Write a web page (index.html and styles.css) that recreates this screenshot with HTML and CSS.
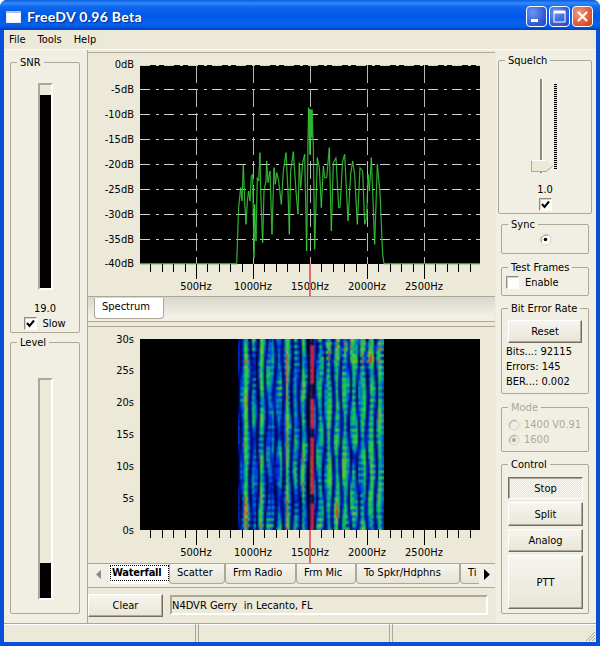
FILE: index.html
```html
<!DOCTYPE html>
<html lang="en">
<head>
<meta charset="utf-8">
<title>FreeDV 0.96 Beta</title>
<link rel="stylesheet" href="styles.css">
</head>
<body>
<div class="window">
  <header class="titlebar">
    <svg class="appicon" width="15" height="13" viewBox="0 0 15 13"><rect x="0" y="0" width="15" height="12" fill="#e8eefc"/><rect x="0" y="0" width="15" height="2" fill="#a9c4f2"/><rect x="1" y="2" width="13" height="9" fill="#fff"/></svg>
    <span class="title">FreeDV 0.96 Beta</span>
    <span class="winbtn"><svg width="19" height="19" viewBox="0 0 19 19"><rect x="4" y="12" width="7" height="3" fill="#fff"/></svg></span>
    <span class="winbtn"><svg width="19" height="19" viewBox="0 0 19 19"><rect x="4" y="4" width="11" height="11" fill="none" stroke="#fff" stroke-width="1"/><rect x="4" y="4" width="11" height="2.5" fill="#fff"/></svg></span>
    <span class="winbtn close"><svg width="19" height="19" viewBox="0 0 19 19"><path d="M5 5 L14 14 M14 5 L5 14" stroke="#fff" stroke-width="2.2" fill="none"/></svg></span>
  </header>
  <div class="client">
    <nav class="menubar"><span>File</span><span>Tools</span><span>Help</span></nav>
    <div class="main">
      <aside class="leftcol">
        <section class="group snr">
          <span class="legend">SNR</span>
          <div class="meter meter-snr"><div class="fill fill-snr"></div></div>
          <div class="value">19.0</div>
          <label class="check slow"><span class="box"><svg width="9" height="9" viewBox="0 0 9 9"><path d="M1 4 L3.5 7 L8 1.5" fill="none" stroke="#000" stroke-width="2"/></svg></span>Slow</label>
        </section>
        <section class="group level">
          <span class="legend">Level</span>
          <div class="meter meter-level"><div class="fill fill-level"></div></div>
        </section>
      </aside>

      <div class="centercol">
        <div class="plot plot-spectrum">
          <svg id="spectrum" width="406" height="243" viewBox="88 52 406 243">
            <rect x="140" y="64" width="340" height="199" fill="#000"/>
            <g id="spec-grid"></g>
            <g transform="translate(230 90) scale(0.33333)">
              <polyline class="trace-glow" points="-270,518 20,518 22,460 26,350 32,290 36,330 40,222 44,330 48,400 52,330 56,300 60,330 64,255 68,250 72,500 74,340 78,450 82,260 86,270 90,185 92,300 98,455 102,300 108,270 110,210 114,275 120,240 126,430 132,230 136,280 140,245 146,270 154,340 160,240 168,185 174,300 178,430 182,240 190,182 198,300 204,370 208,215 212,290 218,215 224,190 230,480 234,150 236,50 240,190 243,60 246,60 250,170 254,475 262,200 268,230 274,350 280,225 284,260 290,260 298,170 304,420 310,215 318,200 326,350 330,350 338,210 344,190 354,390 362,250 368,210 374,250 382,400 390,230 398,240 404,400 410,380 414,250 418,300 424,200 434,460 442,220 450,305 458,490 462,518 750,518"/>
              <polyline class="trace" points="-270,518 20,518 22,460 26,350 32,290 36,330 40,222 44,330 48,400 52,330 56,300 60,330 64,255 68,250 72,500 74,340 78,450 82,260 86,270 90,185 92,300 98,455 102,300 108,270 110,210 114,275 120,240 126,430 132,230 136,280 140,245 146,270 154,340 160,240 168,185 174,300 178,430 182,240 190,182 198,300 204,370 208,215 212,290 218,215 224,190 230,480 234,150 236,50 240,190 243,60 246,60 250,170 254,475 262,200 268,230 274,350 280,225 284,260 290,260 298,170 304,420 310,215 318,200 326,350 330,350 338,210 344,190 354,390 362,250 368,210 374,250 382,400 390,230 398,240 404,400 410,380 414,250 418,300 424,200 434,460 442,220 450,305 458,490 462,518 750,518"/>
              <rect x="236" y="55" width="12" height="85" fill="#2fb52f"/>
            </g>
            <g id="spec-ticks"></g>
            <g class="axis-y">
              <text x="134" y="67">0dB</text><text x="134" y="92">-5dB</text><text x="134" y="117">-10dB</text><text x="134" y="142">-15dB</text><text x="134" y="167">-20dB</text><text x="134" y="192">-25dB</text><text x="134" y="217">-30dB</text><text x="134" y="242">-35dB</text><text x="134" y="266">-40dB</text>
            </g>
            <g class="axis-x">
              <text x="196" y="289">500Hz</text><text x="253" y="289">1000Hz</text><text x="310" y="289">1500Hz</text><text x="367" y="289">2000Hz</text><text x="424" y="289">2500Hz</text>
            </g>
            <rect x="309" y="263" width="2" height="32" fill="#e36a6a"/>
          </svg>
        </div>
        <div class="tabstrip tabstrip-top">
          <span class="tab tab-spectrum">Spectrum</span>
        </div>

        <div class="plot plot-waterfall">
          <svg id="waterfall-axes" width="406" height="236" viewBox="88 327 406 236">
            <rect x="140" y="339" width="340" height="191" fill="#000"/>
            <g id="wf-ticks"></g>
            <g class="axis-y">
              <text x="134" y="343">30s</text><text x="134" y="374">25s</text><text x="134" y="406">20s</text><text x="134" y="438">15s</text><text x="134" y="470">10s</text><text x="134" y="502">5s</text><text x="134" y="534">0s</text>
            </g>
            <g class="axis-x">
              <text x="196" y="556">500Hz</text><text x="253" y="556">1000Hz</text><text x="310" y="556">1500Hz</text><text x="367" y="556">2000Hz</text><text x="424" y="556">2500Hz</text>
            </g>
            <rect x="309" y="530" width="2" height="33" fill="#e36a6a"/>
          </svg>
          <canvas id="waterfall" class="wf-canvas" width="73" height="64"></canvas>
        </div>
        <div class="tabstrip tabstrip-bottom">
          <span class="scroll"><svg width="8" height="11" viewBox="0 0 8 11"><path d="M6 1 L1 5.5 L6 10 Z" fill="#8c8a80"/></svg></span>
          <span class="tab tab-active"><span class="focus">Waterfall</span></span>
          <span class="tab w-scatter">Scatter</span>
          <span class="tab w-radio">Frm Radio</span>
          <span class="tab w-mic">Frm Mic</span>
          <span class="tab w-spkr">To Spkr/Hdphns</span>
          <span class="tab w-ti">Ti</span>
          <span class="scroll scroll-right"><svg width="8" height="11" viewBox="0 0 8 11"><path d="M1 0 L7 5.5 L1 11 Z" fill="#000"/></svg></span>
        </div>
        <div class="msgrow">
          <button class="btn clear">Clear</button>
          <div class="msgbox">N4DVR Gerry&nbsp; in Lecanto, FL</div>
        </div>
      </div>

      <aside class="rightcol">
        <section class="group squelch">
          <span class="legend">Squelch</span>
          <div class="slider">
            <div class="track"></div>
            <svg class="thumb" width="23" height="13" viewBox="0 0 23 13"><path d="M0.5 0.5 H15 L21.5 6 L15 11.5 H0.5 Z" fill="#ece9d8" stroke="#aca899"/><path d="M0.5 0.5 H15 L21 5.5" fill="none" stroke="#fff"/></svg>
            <div class="ticks"></div>
          </div>
          <div class="value">1.0</div>
          <span class="box boxc"><svg width="9" height="9" viewBox="0 0 9 9"><path d="M1 4 L3.5 7 L8 1.5" fill="none" stroke="#000" stroke-width="2"/></svg></span>
        </section>
        <section class="group sync">
          <span class="legend">Sync</span>
          <svg class="radio" width="13" height="13" viewBox="0 0 13 13"><circle cx="6.5" cy="6.5" r="5.5" fill="#fff" stroke="#d2cfbf"/><path d="M2.5 9 A5 5 0 0 1 9 2.5" fill="none" stroke="#9a988c"/><circle cx="6.5" cy="6.5" r="1.8" fill="#000"/></svg>
        </section>
        <section class="group frames">
          <span class="legend">Test Frames</span>
          <label class="check"><span class="box"></span>Enable</label>
        </section>
        <section class="group ber">
          <span class="legend">Bit Error Rate</span>
          <button class="btn reset">Reset</button>
          <div class="stat">Bits...: 92115</div>
          <div class="stat">Errors: 145</div>
          <div class="stat">BER...: 0.002</div>
        </section>
        <section class="group mode">
          <span class="legend">Mode</span>
          <div class="opt"><svg width="12" height="12" viewBox="0 0 12 12"><circle cx="6" cy="6" r="5" fill="none" stroke="#d6d3c4"/><path d="M2 8.5 A5 5 0 0 1 8.5 2" fill="none" stroke="#a8a698"/></svg>1400 V0.91</div>
          <div class="opt"><svg width="12" height="12" viewBox="0 0 12 12"><circle cx="6" cy="6" r="5" fill="none" stroke="#d6d3c4"/><path d="M2 8.5 A5 5 0 0 1 8.5 2" fill="none" stroke="#a8a698"/><circle cx="6" cy="6" r="2" fill="#a8a698"/></svg>1600</div>
        </section>
        <section class="group control">
          <span class="legend">Control</span>
          <button class="btn pressed">Stop</button>
          <button class="btn split">Split</button>
          <button class="btn analog">Analog</button>
          <button class="btn ptt">PTT</button>
        </section>
      </aside>
    </div>
    <footer class="statusbar">
      <span class="cell c1"></span><span class="cell c2"></span><span class="cell c3"><svg class="grip" width="12" height="12" viewBox="0 0 12 12"><path d="M11 2 L2 11 M11 5 L5 11 M11 8 L8 11" stroke="#aca899" stroke-width="1"/></svg></span>
    </footer>
  </div>
</div>
<script src="app.js"></script>
</body>
</html>
```
FILE: styles.css
```css
* { box-sizing: border-box; }
html, body { margin: 0; padding: 0; background: #fff; }
body { font: 11px "DejaVu Sans Condensed", "DejaVu Sans", sans-serif; color: #000; }
.window { width: 600px; height: 646px; display: flex; flex-direction: column; background: #0a4fdc; border-radius: 7px 7px 0 0; overflow: hidden; }

.titlebar { height: 30px; display: flex; align-items: center; padding: 3px 7px 0 6px; flex: none;
  background: linear-gradient(#0a5ae0 0, #2f8bf8 3px, #0f66ee 7px, #0058e8 16px, #0463ee 24px, #0050d8 28px, #003dbc 30px); }
.appicon { flex: none; margin-top: 1px; }
.title { flex: 1; margin-left: 6px; font: 700 14px Lato, "DejaVu Sans", sans-serif; color: #fff; text-shadow: 1px 1px 1px #0a2f8c; letter-spacing: .3px; }
.winbtn { width: 21px; height: 21px; margin-left: 2px; border: 1px solid #fff; border-radius: 4px; display: flex; align-items: center; justify-content: center; background: radial-gradient(circle at 30% 30%, #6d94f0, #2a56d6 70%, #2348c0); }
.close { background: radial-gradient(circle at 30% 30%, #ee9a80, #d8532c 70%, #c03a18); }

.client { flex: 1; margin: 0 4px 4px; display: flex; flex-direction: column; background: #ece9d8; min-height: 0; }
.menubar { height: 20px; flex: none; display: flex; padding: 3px 0 0 5px; gap: 12px; border-bottom: 1px solid #fbfaf4; font-size: 11px; }
.main { height: 573px; flex: none; display: flex; background: #f1efe3; }

.group { position: relative; border: 1px solid #aca899; border-radius: 2px; }
.legend { position: absolute; top: -7px; left: 6px; padding: 0 3px; background: #f1efe3; line-height: 13px; white-space: nowrap; }

.leftcol { width: 83px; flex: none; padding: 12px 0 0 6px; display: flex; flex-direction: column; gap: 9px; }
.snr { width: 70px; height: 271px; display: flex; flex-direction: column; align-items: center; padding-top: 20px; }
.level { width: 70px; height: 272px; display: flex; flex-direction: column; align-items: center; padding-top: 35px; }
.meter { width: 15px; border: 2px solid; border-color: #aca899 #fff #fff #aca899; background: #ece9d8; display: flex; flex-direction: column; justify-content: flex-end; }
.fill { background: #000; }
.meter-snr { height: 207px; }
.fill-snr { height: 193px; }
.meter-level { height: 222px; }
.fill-level { height: 35px; }
.value { text-align: center; line-height: 13px; margin-top: 12px; }
.check { display: flex; align-items: center; gap: 5px; }
.box { width: 13px; height: 13px; border: 1px solid #8f8d80; border-right-color: #fff; border-bottom-color: #fff; background: #fff; display: flex; align-items: center; justify-content: center; flex: none; box-shadow: inset 1px 1px 0 #d8d5c6; }
.slow { margin-top: 2px; }

.centercol { width: 408px; flex: none; display: flex; flex-direction: column; background: #ece9d8; border-left: 1px solid #aca899; }
.plot { background: #ece9d8; position: relative; flex: none; }
.plot svg { display: block; }
.plot-spectrum { border-top: 1px solid #aca899; margin-top: 2px; height: 244px; }
.tabstrip-top { height: 26px; flex: none; margin-top: 0; display: flex; align-items: flex-start; padding: 1px 0 0 6px; border-top: 1px solid #aca899; border-bottom: 1px solid #aca899; background: linear-gradient(#d9d7cb 0, #f3f2e9 21px, #f1efe3 22px); }
.plot-waterfall { border-top: 1px solid #aca899; margin-top: 4px; height: 237px; }
.wf-canvas { position: absolute; left: 150px; top: 12px; width: 146px; height: 191px; }
.tabstrip-bottom { height: 25px; flex: none; display: flex; align-items: flex-start; border-top: 1px solid #aca899; border-bottom: 1px solid #aca899; background: #f1efe3; padding-left: 0; position: relative; }
.scroll { width: 21px; height: 20px; display: flex; align-items: center; justify-content: center; flex: none; padding-left: 1px; }
.scroll-right { position: absolute; right: 2px; top: 0; background: #f1efe3; width: 14px; }
.tab { height: 20px; line-height: 17px; border: 1px solid #aca899; border-top: 0; border-radius: 0 0 4px 4px; background: linear-gradient(#f7f6ef, #e6e3d4); text-align: left; padding-left: 7px; flex: none; white-space: nowrap; overflow: hidden; }
.tab-spectrum { width: 70px; height: 21px; background: #fff; padding-left: 7px; font-size: 11px; }
.tab-active { width: 60px; background: #fff; border: 0; padding: 1px 0 0 1px; font-weight: 700; }
.focus { display: block; border: 1px dotted #000; line-height: 14px; padding: 0 1px; height: 16px; letter-spacing: -.2px; }
.w-scatter { width: 56px; }
.w-radio { width: 71px; }
.w-mic { width: 60px; }
.w-spkr { width: 104px; }
.w-ti { width: 30px; }
.msgrow { flex: 1; display: flex; align-items: flex-start; padding: 6px 0 0 0; gap: 7px; }
.btn { font: inherit; color: #000; background: linear-gradient(#f6f5ee, #e9e6d8); border: 1px solid; border-color: #fff #716f64 #716f64 #fff; box-shadow: inset -1px -1px 0 #aca899; padding: 0; display: block; }
.clear { width: 75px; height: 23px; margin-left: 0; }
.msgbox { width: 318px; height: 20px; margin-top: 1px; border: 2px solid; border-color: #aca899 #fff #fff #aca899; padding: 1px 0 0 0; line-height: 15px; background: #ece9d8; }

.rightcol { width: 101px; flex: none; padding-top: 10px; display: flex; flex-direction: column; align-items: flex-start; padding-left: 5px; border-left: 1px solid #ece9d8; }
.squelch { width: 94px; height: 154px; margin-left: -3px; display: flex; flex-direction: column; align-items: center; }
.slider { position: relative; width: 92px; height: 100px; margin-top: 18px; flex: none; }
.track { position: absolute; left: 41px; top: 0; width: 3px; height: 94px; background: #8d8b7e; border-right: 1px solid #fff; }
.thumb { position: absolute; left: 32px; top: 81px; }
.ticks { position: absolute; left: 55px; top: 5px; width: 3px; height: 85px; background: repeating-linear-gradient(#000 0 1px, #d8d5c6 1px 2px); }
.squelch .value { margin-top: 4px; }
.boxc { margin-top: 2px; }
.sync { width: 88px; height: 30px; margin-top: 10px; display: flex; justify-content: center; align-items: center; padding-top: 0; }
.frames { width: 88px; height: 29px; margin-top: 13px; padding: 8px 0 0 4px; }
.frames .check { gap: 6px; }
.ber { width: 88px; height: 86px; margin-top: 12px; padding: 11px 0 0 4px; }
.reset { width: 74px; height: 23px; margin: 0 0 1px 2px; }
.stat { line-height: 15px; }
.mode { width: 88px; height: 45px; margin-top: 13px; padding: 9px 0 0 6px; color: #aca899; }
.opt { display: flex; align-items: center; gap: 4px; line-height: 15px; }
.control { width: 88px; height: 150px; margin-top: 12px; padding: 12px 0 0 6px; }
.control .btn { width: 75px; }
.pressed { height: 22px; border-color: #716f64 #fff #fff #716f64; box-shadow: inset 1px 1px 0 #aca899; background: repeating-conic-gradient(#f7f6ef 0 25%, #e9e6d6 0 50%) 0 0 / 2px 2px; }
.split { height: 24px; margin-top: 3px; }
.analog { height: 23px; margin-top: 3px; }
.ptt { height: 54px; margin-top: 3px; }

.statusbar { flex: 1; display: flex; border-top: 1px solid #aca899; box-shadow: inset 0 1px 0 #fff; }
.cell { display: block; height: 100%; border-right: 1px solid #aca899; position: relative; }
.c1 { width: 192px; }
.c2 { width: 192px; margin-left: 2px; border-left: 1px solid #aca899; }
.c3 { flex: 1; margin-left: 2px; border-left: 1px solid #aca899; border-right: 0; display: flex; justify-content: flex-end; align-items: flex-end; }
.grip { display: block; }

.axis-y text { text-anchor: end; font: 11px "DejaVu Sans Condensed", "DejaVu Sans", sans-serif; fill: #000; }
.axis-x text { text-anchor: middle; font: 11px "DejaVu Sans Condensed", "DejaVu Sans", sans-serif; fill: #000; }
.grid-h { stroke: #cfcfcf; stroke-width: 1; stroke-dasharray: 10 6 3 5; }
.grid-v { stroke: #b8b8b8; stroke-width: 1; stroke-dasharray: 18 6; }
.tick { stroke: #000; stroke-width: 1; }
.trace { fill: none; stroke: #3fdc3f; stroke-width: 2.4; }
.trace-glow { fill: none; stroke: #1c6e1c; stroke-width: 5; opacity: .4; }
```
FILE: app.js
```js
(function () {
  var NS = 'http://www.w3.org/2000/svg';
  function line(parent, cls, x1, y1, x2, y2) {
    var l = document.createElementNS(NS, 'line');
    l.setAttribute('class', cls);
    l.setAttribute('x1', x1); l.setAttribute('y1', y1);
    l.setAttribute('x2', x2); l.setAttribute('y2', y2);
    parent.appendChild(l);
  }
  function ticks(parent, y) {
    for (var k = 1; k <= 29; k++) {
      var x = Math.round(139 + 11.4 * k) + 0.5;
      line(parent, 'tick', x, y, x, y + (k % 5 === 0 ? 15 : 8));
    }
  }
  var grid = document.getElementById('spec-grid');
  [64.5, 88.5, 113.5, 138.5, 163.5, 188.5, 213.5, 238.5].forEach(function (y) {
    line(grid, 'grid-h', 140, y, 480, y);
  });
  [196.5, 253.5, 310.5, 367.5, 424.5].forEach(function (x) {
    line(grid, 'grid-v', x, 64, x, 263);
  });
  ticks(document.getElementById('spec-ticks'), 263);
  ticks(document.getElementById('wf-ticks'), 530);

  var seed = 20116;
  function rnd() { seed = (seed * 1664525 + 1013904223) >>> 0; return seed / 4294967296; }
  var cv = document.getElementById('waterfall');
  var ctx = cv.getContext('2d');
  var W = cv.width, H = cv.height;
  var img = ctx.createImageData(W, H);

  /* dark gaps between the carriers, as page x positions */
  var gaps = [240, 251, 258, 266, 275, 283, 292, 300, 308, 316, 324, 333, 341, 350, 358, 367, 376];
  var phases = gaps.map(function () { return rnd() * 6.28; });

  var noise = [];
  for (var n = 0; n < H * W; n++) noise.push(rnd());
  function smooth(x, y) {
    var s = 0, c = 0;
    for (var dy = -1; dy <= 1; dy++) {
      for (var dx = -1; dx <= 1; dx++) {
        var yy = y + dy * 2, xx = x + dx;
        if (yy >= 0 && yy < H && xx >= 0 && xx < W) { s += noise[yy * W + xx]; c++; }
      }
    }
    return s / c;
  }

  function mix(a, b, t) {
    return [a[0] + (b[0] - a[0]) * t, a[1] + (b[1] - a[1]) * t, a[2] + (b[2] - a[2]) * t];
  }
  var stops = [
    [0, [0, 0, 20]], [0.14, [0, 10, 120]], [0.38, [0, 60, 235]], [0.52, [0, 150, 170]],
    [0.68, [20, 205, 70]], [0.84, [110, 205, 50]], [0.94, [200, 110, 40]], [1, [230, 50, 40]]
  ];
  function colour(v) {
    for (var i = 1; i < stops.length; i++) {
      if (v <= stops[i][0]) {
        return mix(stops[i - 1][1], stops[i][1], (v - stops[i - 1][0]) / (stops[i][0] - stops[i - 1][0]));
      }
    }
    return stops[stops.length - 1][1];
  }

  for (var y = 0; y < H; y++) {
    for (var x = 0; x < W; x++) {
      var px = 238 + x * 2 + 1;
      var right = px > 316;
      var level = (right ? 0.62 : 0.5) + Math.sin(px * 0.9) * 0.1;
      var sm = smooth(x, y);
      var v = level + (sm - 0.5) * 1.1;
      for (var i = 0; i < gaps.length; i++) {
        var d = (px - gaps[i] - Math.sin(y * 0.25 + phases[i]) * 1.1) / 1.7;
        v *= 1 - 0.88 * Math.exp(-d * d);
      }
      /* bright persistent lines on the left half */
      [246, 262, 287, 304].forEach(function (b) {
        var e = (px - b) / 1.4;
        v += 0.3 * Math.exp(-e * e);
      });
      if (y < 8 && right && noise[y * W + x] > 0.6) v += 0.18;
      v *= Math.min(1, Math.min(x + 1, W - x) / 1.5);
      var rgb = colour(Math.max(0, Math.min(1, v)));
      if (x === 35) { rgb = [0, 0, 30]; }
      if (x === 36 || x === 37) {
        var on = (y > 1 && y < 15) || (y > 19 && y < 30) || (y > 32 && y < 52) || y > 54;
        var strong = on ? [225, 30, 40] : [40, 0, 40];
        rgb = mix(rgb, strong, x === 37 ? 0.95 : 0.6);
      }
      var o = (y * W + x) * 4;
      img.data[o] = rgb[0]; img.data[o + 1] = rgb[1]; img.data[o + 2] = rgb[2]; img.data[o + 3] = 255;
    }
  }
  ctx.putImageData(img, 0, 0);
})();
```
